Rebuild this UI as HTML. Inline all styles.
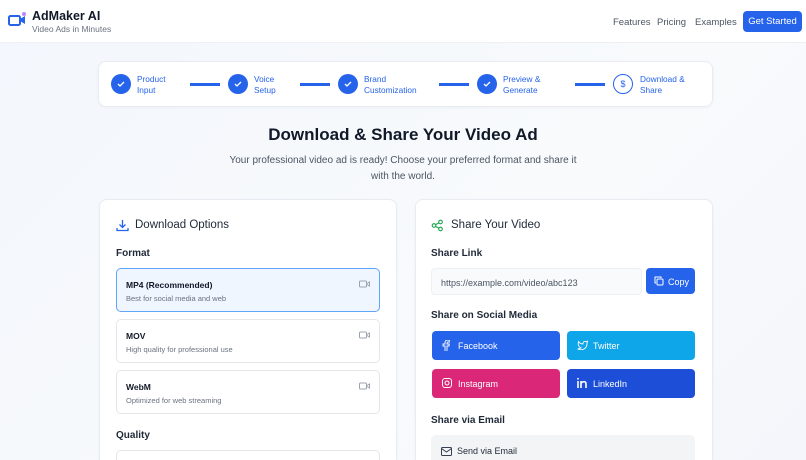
<!DOCTYPE html>
<html style="width:806px;height:460px;overflow:hidden"><head><meta charset="utf-8"><style>
*{box-sizing:border-box;margin:0;padding:0}
body{width:806px;height:460px;overflow:hidden;font-family:"Liberation Sans","DejaVu Sans",sans-serif;background:linear-gradient(135deg,#f3f7fd,#f8fafc 60%,#f4f6fb);position:relative;color:#111827}
.abs{position:absolute}
header{position:absolute;left:0;top:0;width:806px;height:43px;background:#fff;border-bottom:1px solid #eef0f4}
.card{position:absolute;background:#fff;border:1px solid #e8ecf2;border-radius:8px;box-shadow:0 1px 3px rgba(0,0,0,.04)}
.circ{position:absolute;top:74px;width:20px;height:20px;border-radius:50%;background:#2563eb}
.circ svg{position:absolute;left:5px;top:5px}
.lbl{position:absolute;top:74px;font-size:8.3px;line-height:11px;color:#2563eb}
.line{position:absolute;top:83px;height:3px;width:30px;background:#2563eb}
.opt{position:absolute;left:116px;width:264px;height:44px;border:1px solid #e5e7eb;border-radius:5px;background:#fff}
.opt b{position:absolute;left:9px;top:11px;font-size:8.5px;font-weight:600;color:#111827}
.opt span{position:absolute;left:9px;top:25px;font-size:7.5px;color:#6b7280}
.opt svg{position:absolute;right:9px;top:11px}
.h3{position:absolute;font-size:10px;font-weight:600;color:#1f2937}
.sb{position:absolute;width:128px;height:29px;border-radius:4px;color:#fff;font-size:9px}
.sb span{position:absolute;left:26px;top:10px}
.sb svg{position:absolute;left:10px;top:9px}
</style></head><body>
<header>
<svg class="abs" style="left:8px;top:11px" width="20" height="17" viewBox="0 0 20 17"><rect x="1" y="5" width="11" height="9" rx="1.5" fill="none" stroke="#2563eb" stroke-width="2"/><path d="M12 8l5-3v8l-5-3z" fill="#2563eb"/><circle cx="16" cy="3" r="2" fill="#c084fc"/></svg>
<div class="abs" style="left:32px;top:9px;font-size:12.5px;font-weight:700">AdMaker AI</div>
<div class="abs" style="left:32px;top:24px;font-size:8.5px;color:#6b7280">Video Ads in Minutes</div>
<div class="abs" style="left:613px;top:17px;font-size:9.5px;color:#4b5563">Features</div>
<div class="abs" style="left:657px;top:17px;font-size:9.5px;color:#4b5563">Pricing</div>
<div class="abs" style="left:695px;top:17px;font-size:9.5px;color:#4b5563">Examples</div>
<div class="abs" style="left:743px;top:11px;width:59px;height:21px;background:#2563eb;border-radius:4px;color:#fff;font-size:9.5px;text-align:center;line-height:21px">Get Started</div>
</header>
<div class="card" style="left:98px;top:61px;width:615px;height:46px"></div>
<div class="circ" style="left:111px"><svg width="10" height="10"><path d="M2 5l2 2 4-4" stroke="#fff" stroke-width="1.3" fill="none"/></svg></div>
<div class="lbl" style="left:137px">Product<br>Input</div>
<div class="line" style="left:190px"></div>
<div class="circ" style="left:228px"><svg width="10" height="10"><path d="M2 5l2 2 4-4" stroke="#fff" stroke-width="1.3" fill="none"/></svg></div>
<div class="lbl" style="left:254px">Voice<br>Setup</div>
<div class="line" style="left:300px"></div>
<div class="circ" style="left:338px"><svg width="10" height="10"><path d="M2 5l2 2 4-4" stroke="#fff" stroke-width="1.3" fill="none"/></svg></div>
<div class="lbl" style="left:364px">Brand<br>Customization</div>
<div class="line" style="left:439px"></div>
<div class="circ" style="left:477px"><svg width="10" height="10"><path d="M2 5l2 2 4-4" stroke="#fff" stroke-width="1.3" fill="none"/></svg></div>
<div class="lbl" style="left:503px">Preview &amp;<br>Generate</div>
<div class="line" style="left:575px"></div>
<div class="circ" style="left:613px;background:#fff;border:1px solid #2563eb;font-size:9px;color:#2563eb;text-align:center;line-height:18px">$</div>
<div class="lbl" style="left:640px">Download &amp;<br>Share</div>

<div class="abs" style="left:0;width:806px;top:125px;text-align:center;font-size:17px;font-weight:700;color:#111827">Download &amp; Share Your Video Ad</div>
<div class="abs" style="left:0;width:806px;top:153px;text-align:center;font-size:10px;line-height:16px;color:#4b5563">Your professional video ad is ready! Choose your preferred format and share it<br>with the world.</div>

<div class="card" style="left:99px;top:199px;width:298px;height:261px;border-bottom:none;border-radius:8px 8px 0 0"></div>
<svg class="abs" style="left:116px;top:219px" width="13" height="13" viewBox="0 0 13 13"><path d="M6.5 1v7M3.5 5.5l3 3 3-3M1 9v2.5h11V9" stroke="#2563eb" stroke-width="1.3" fill="none"/></svg>
<div class="abs" style="left:135px;top:219px;font-size:11.5px;color:#1f2937">Download Options</div>
<div class="h3" style="left:116px;top:248px">Format</div>
<div class="opt" style="top:268px;background:#eff6ff;border-color:#60a5fa"><b>MP4 (Recommended)</b><span>Best for social media and web</span><svg width="11" height="8"><rect x=".5" y="1" width="7" height="6" rx="1" fill="none" stroke="#9ca3af"/><path d="M8 3.5l2.5-1.5v4l-2.5-1.5" fill="none" stroke="#9ca3af"/></svg></div>
<div class="opt" style="top:319px"><b>MOV</b><span>High quality for professional use</span><svg width="11" height="8"><rect x=".5" y="1" width="7" height="6" rx="1" fill="none" stroke="#9ca3af"/><path d="M8 3.5l2.5-1.5v4l-2.5-1.5" fill="none" stroke="#9ca3af"/></svg></div>
<div class="opt" style="top:370px"><b>WebM</b><span>Optimized for web streaming</span><svg width="11" height="8"><rect x=".5" y="1" width="7" height="6" rx="1" fill="none" stroke="#9ca3af"/><path d="M8 3.5l2.5-1.5v4l-2.5-1.5" fill="none" stroke="#9ca3af"/></svg></div>
<div class="h3" style="left:116px;top:430px">Quality</div>
<div class="opt" style="top:450px;height:10px;border-bottom:none;border-radius:5px 5px 0 0"></div>

<div class="card" style="left:415px;top:199px;width:298px;height:261px;border-bottom:none;border-radius:8px 8px 0 0"></div>
<svg class="abs" style="left:431px;top:219px" width="13" height="13" viewBox="0 0 13 13"><circle cx="9.5" cy="3" r="1.8" fill="none" stroke="#16a34a" stroke-width="1.1"/><circle cx="3" cy="6.5" r="1.8" fill="none" stroke="#16a34a" stroke-width="1.1"/><circle cx="9.5" cy="10" r="1.8" fill="none" stroke="#16a34a" stroke-width="1.1"/><path d="M4.6 5.6l3.3-1.8M4.6 7.4l3.3 1.8" stroke="#16a34a" stroke-width="1.1"/></svg>
<div class="abs" style="left:451px;top:219px;font-size:11.5px;color:#1f2937">Share Your Video</div>
<div class="h3" style="left:431px;top:248px">Share Link</div>
<div class="abs" style="left:431px;top:268px;width:211px;height:27px;background:#f9fafb;border:1px solid #eef0f3;border-radius:4px;font-size:9px;color:#4b5563;padding:9px 0 0 9px">https://example.com/video/abc123</div>
<div class="abs" style="left:646px;top:268px;width:49px;height:26px;background:#2563eb;border-radius:4px;color:#fff;font-size:9px;padding:9px 0 0 22px">Copy<svg class="abs" style="left:8px;top:8px" width="10" height="10"><rect x="3" y="3" width="6" height="6" rx="1" fill="none" stroke="#fff"/><path d="M2 7H1V1h6v1" fill="none" stroke="#fff"/></svg></div>
<div class="h3" style="left:431px;top:310px">Share on Social Media</div>
<div class="sb" style="left:432px;top:331px;background:#2563eb"><svg width="8" height="11"><path d="M5 11V6h2l.3-2H5V3c0-.6.3-1 1-1h1.3V.2A10 10 0 005.5 0C3.9 0 3 1 3 2.7V4H1v2h2v5" fill="none" stroke="#fff" stroke-width=".9"/></svg><span>Facebook</span></div>
<div class="sb" style="left:567px;top:331px;background:#0ea5e9"><svg width="11" height="10"><path d="M10.5 1.2a4 4 0 01-1.3.5A2 2 0 006 3.4v.5A5 5 0 011.6 1.6S-.3 6 4 7.9A5.5 5.5 0 01.7 8.8c4.2 2.4 9.3 0 9.3-5.4 0-.2 0-.3 0-.4a3 3 0 00.5-1.8z" fill="none" stroke="#fff" stroke-width=".9"/></svg><span>Twitter</span></div>
<div class="sb" style="left:432px;top:369px;background:#db2777"><svg width="10" height="10"><rect x=".5" y=".5" width="9" height="9" rx="2.5" fill="none" stroke="#fff"/><circle cx="5" cy="5" r="2" fill="none" stroke="#fff"/></svg><span>Instagram</span></div>
<div class="sb" style="left:567px;top:369px;background:#1d4ed8"><svg width="11" height="10"><path d="M1 3v7M1 0v1.5M4 10V3M4 6c0-2 5-4 5 0v4" fill="none" stroke="#fff" stroke-width="1.6"/></svg><span>LinkedIn</span></div>
<div class="h3" style="left:431px;top:415px">Share via Email</div>
<div class="abs" style="left:431px;top:435px;width:264px;height:25px;background:#f3f4f6;border-radius:5px 5px 0 0"><svg class="abs" style="left:10px;top:12px" width="11" height="9"><rect x=".5" y=".5" width="10" height="8" rx="1" fill="none" stroke="#374151"/><path d="M.5 1.5l5 3.5 5-3.5" fill="none" stroke="#374151"/></svg><div class="abs" style="left:26px;top:11px;font-size:9px;color:#1f2937">Send via Email</div></div>
</body></html>
